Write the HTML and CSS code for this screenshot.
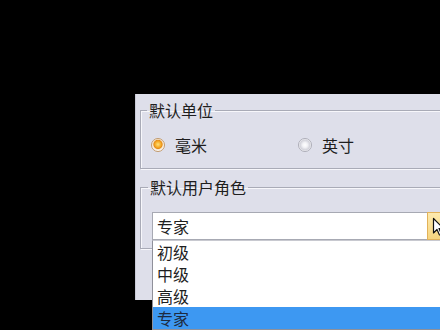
FILE: index.html
```html
<!DOCTYPE html>
<html lang="zh-CN">
<head>
<meta charset="utf-8">
<title>默认设置</title>
<link rel="stylesheet" href="styles.css">
</head>
<body>
<div class="dialog">
  <fieldset class="group units">
    <legend class="group-title">默认单位</legend>
    <div class="radio-row">
      <label class="radio-item"><span class="radio radio-on"></span><span class="radio-text">毫米</span></label>
      <label class="radio-item"><span class="radio"></span><span class="radio-text">英寸</span></label>
    </div>
  </fieldset>
  <fieldset class="group role">
    <legend class="group-title">默认用户角色</legend>
    <div class="combo">
      <div class="combo-field">专家</div>
      <div class="combo-btn">
        <svg class="cursor" width="12" height="20" viewBox="0 0 12 20"><path d="M1.5 1.5 L1.5 16 L5 12.5 L7.5 18 L9.5 17 L7 11.5 L11.5 11.5 Z" fill="#fff" stroke="#111" stroke-width="1.2" stroke-linejoin="round"/></svg>
      </div>
      <ul class="combo-list">
        <li class="combo-item">初级</li>
        <li class="combo-item">中级</li>
        <li class="combo-item">高级</li>
        <li class="combo-item selected">专家</li>
      </ul>
    </div>
  </fieldset>
</div>
</body>
</html>
```

FILE: styles.css
```css
html, body {
  margin: 0;
  padding: 0;
}
body {
  width: 440px;
  height: 330px;
  overflow: hidden;
  background: #000;
  font-family: "Noto Sans CJK SC", "Noto Sans", sans-serif;
  font-size: 16px;
  color: #1e1e1e;
}
.dialog {
  margin: 94px 0 0 135px;
  width: 320px;
  height: 206px;
  box-sizing: border-box;
  padding: 0 5px 0 5px;
  background: #dedfea;
  border-left: 1px solid #c9cad6;
  display: flex;
  flex-direction: column;
}
.dialog .group {
  margin: 0;
  border: 1px solid #a9abb7;
  box-shadow: inset 1px 1px 0 #f7f7fb, 1px 1px 0 #f7f7fb;
  min-width: 0;
}
.group-title {
  padding: 0 2px;
  margin-left: -4px;
  line-height: 18px;
  font-size: 16px;
  color: #1e1e1e;
}
.units {
  margin-top: 7px !important;
  padding: 17px 10px 14px 10px;
  margin-left: -1px !important;
}
.role {
  margin-top: 9px !important;
  padding: 16px 12px 8px 11px;
  margin-left: -1px !important;
}
.radio-row {
  display: grid;
  grid-template-columns: 147px auto;
  height: 18px;
  align-items: center;
}
.radio-item {
  display: flex;
  align-items: center;
  gap: 10px;
  line-height: 18px;
}
.radio {
  width: 14px;
  height: 14px;
  box-sizing: border-box;
  border-radius: 50%;
  border: 1px solid #aeaeb8;
  background: radial-gradient(circle at 50% 50%, #ffffff 0, #f2f2f6 2.5px, #d2d2da 5px, #f6f6f9 6px);
}
.radio-on {
  border-color: #c29a6c;
  background: radial-gradient(circle at 50% 45%, #ffe27a 0, #f7ae2a 2.8px, #e58d19 4.2px, #f6e2c6 5px, #fdf8f1 6px);
}
.combo {
  position: relative;
  display: flex;
  width: 292px;
  height: 28px;
  box-sizing: border-box;
  border: 1px solid #a7a9b3;
  background: #fff;
}
.combo-field {
  flex: 1;
  padding-left: 4px;
  line-height: 26px;
}
.combo-btn {
  width: 17px;
  box-sizing: border-box;
  border: 1px solid #e2b25a;
  margin: -1px -1px -1px 0;
  background: linear-gradient(#fdeaae, #f7d57e);
  position: relative;
}
.cursor {
  position: absolute;
  left: 4px;
  top: 4px;
}
.combo-list {
  position: absolute;
  left: -1px;
  top: 27px;
  width: 300px;
  margin: 0;
  padding: 0;
  list-style: none;
  background: #fff;
  border: 1px solid #8f909a;
  border-top: 1px solid #c8c9d0;
}
.combo-item {
  height: 22px;
  line-height: 22px;
  padding-left: 4px;
  color: #1e1e1e;
}
.combo-item.selected {
  background: #3d98f2;
  color: #1d2a40;
}
```
